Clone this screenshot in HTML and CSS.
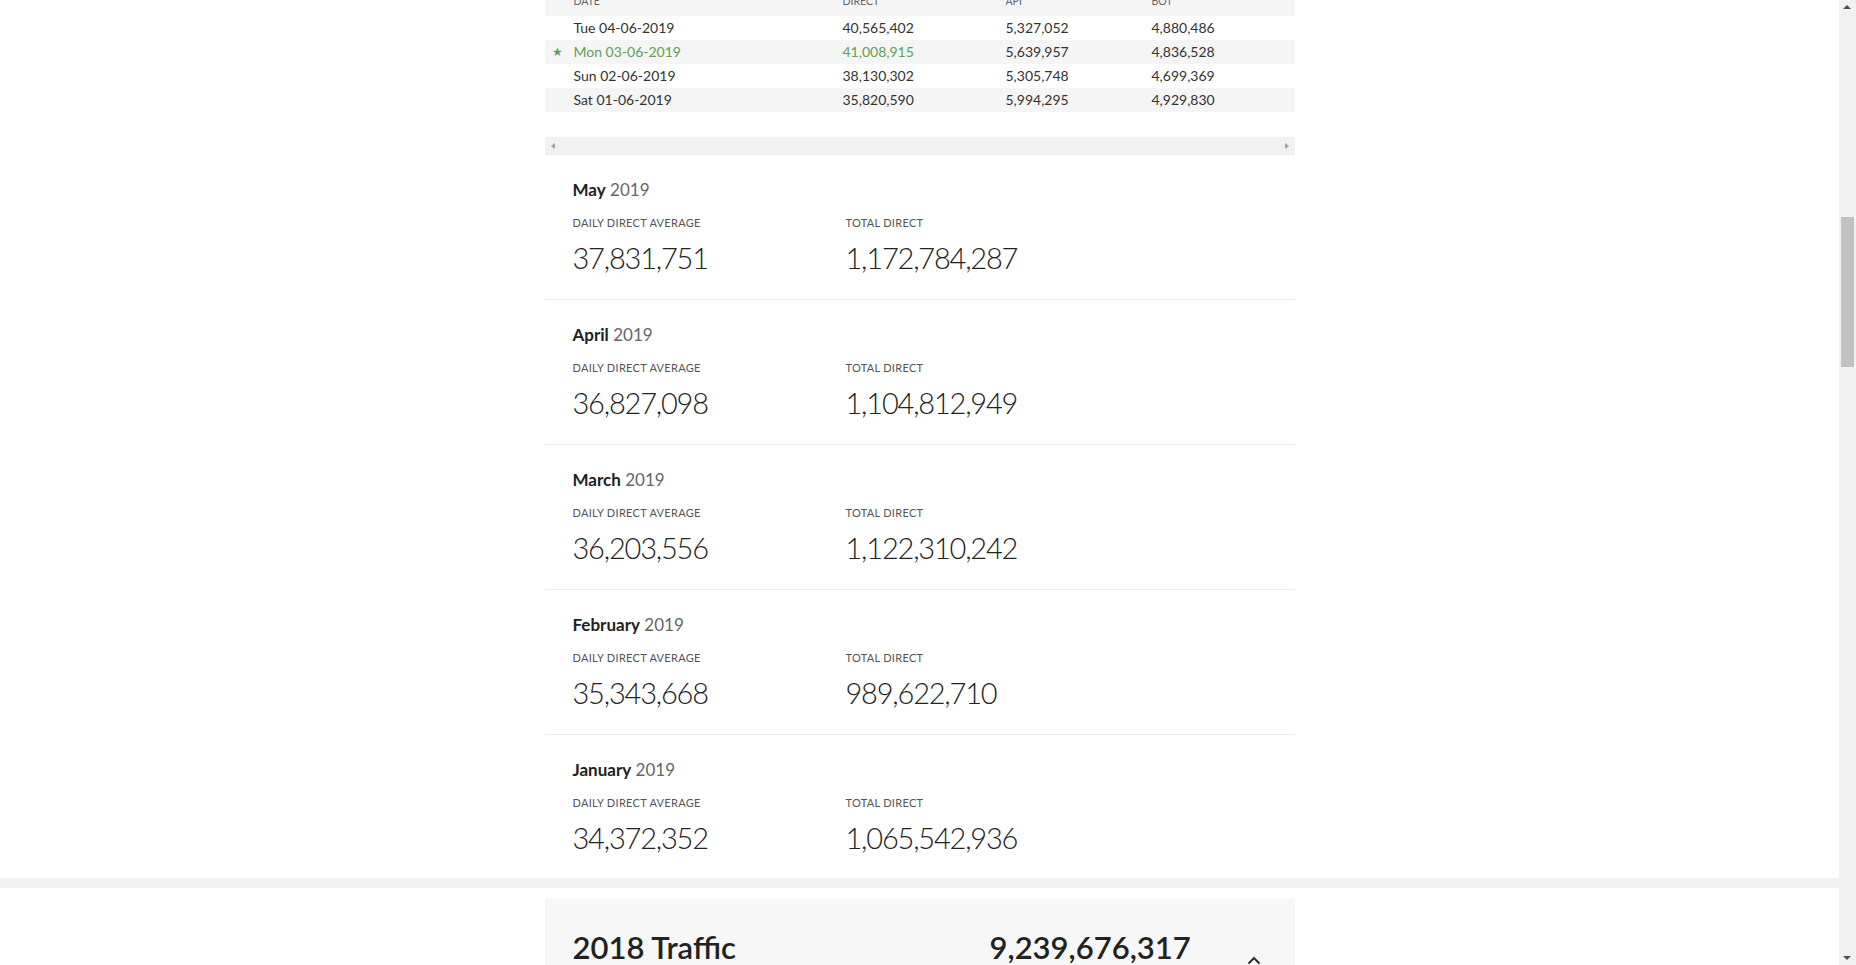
FILE: index.html
```html
<!DOCTYPE html>
<html lang="en">
<head>
<meta charset="utf-8">
<title>Traffic</title>
<link rel="stylesheet" href="styles.css">
</head>
<body>
<div class="page">
  <main class="wrap">
    <section class="daily">
      <div class="table">
        <div class="row head">
          <span class="mark"></span><span>Date</span><span>Direct</span><span>API</span><span>Bot</span>
        </div>
        <div class="row">
          <span class="mark"></span><span>Tue 04-06-2019</span><span>40,565,402</span><span>5,327,052</span><span>4,880,486</span>
        </div>
        <div class="row alt best">
          <span class="mark">★</span><span>Mon 03-06-2019</span><span>41,008,915</span><span class="plain">5,639,957</span><span class="plain">4,836,528</span>
        </div>
        <div class="row">
          <span class="mark"></span><span>Sun 02-06-2019</span><span>38,130,302</span><span>5,305,748</span><span>4,699,369</span>
        </div>
        <div class="row alt">
          <span class="mark"></span><span>Sat 01-06-2019</span><span>35,820,590</span><span>5,994,295</span><span>4,929,830</span>
        </div>
      </div>
      <div class="hscroll">
        <span class="arrow left"></span>
        <span class="arrow right"></span>
      </div>
    </section>

    <section class="months">
      <article class="month">
        <h3 class="month-title"><strong>May</strong> 2019</h3>
        <div class="stats">
          <div class="stat"><div class="label">Daily Direct Average</div><div class="value">37,831,751</div></div>
          <div class="stat"><div class="label">Total Direct</div><div class="value">1,172,784,287</div></div>
        </div>
      </article>
      <article class="month">
        <h3 class="month-title"><strong>April</strong> 2019</h3>
        <div class="stats">
          <div class="stat"><div class="label">Daily Direct Average</div><div class="value">36,827,098</div></div>
          <div class="stat"><div class="label">Total Direct</div><div class="value">1,104,812,949</div></div>
        </div>
      </article>
      <article class="month">
        <h3 class="month-title"><strong>March</strong> 2019</h3>
        <div class="stats">
          <div class="stat"><div class="label">Daily Direct Average</div><div class="value">36,203,556</div></div>
          <div class="stat"><div class="label">Total Direct</div><div class="value">1,122,310,242</div></div>
        </div>
      </article>
      <article class="month">
        <h3 class="month-title"><strong>February</strong> 2019</h3>
        <div class="stats">
          <div class="stat"><div class="label">Daily Direct Average</div><div class="value">35,343,668</div></div>
          <div class="stat"><div class="label">Total Direct</div><div class="value">989,622,710</div></div>
        </div>
      </article>
      <article class="month">
        <h3 class="month-title"><strong>January</strong> 2019</h3>
        <div class="stats">
          <div class="stat"><div class="label">Daily Direct Average</div><div class="value">34,372,352</div></div>
          <div class="stat"><div class="label">Total Direct</div><div class="value">1,065,542,936</div></div>
        </div>
      </article>
    </section>
  </main>

  <div class="band"></div>

  <main class="wrap">
    <section class="year-card">
      <h2 class="year-title">2018 Traffic</h2>
      <div class="year-total">9,239,676,317</div>
      <svg class="chevron" width="14" height="9" viewBox="0 0 14 9" aria-hidden="true">
        <polyline points="1.5,7.5 7,2 12.5,7.5" fill="none" stroke="#222" stroke-width="1.8"/>
      </svg>
    </section>
  </main>
</div>

<div class="vscroll">
  <span class="vbtn up"></span>
  <span class="thumb"></span>
  <span class="vbtn down"></span>
</div>
</body>
</html>
```

FILE: styles.css
```css
* { box-sizing: border-box; }

html, body {
  margin: 0;
  padding: 0;
  height: 100%;
  overflow: hidden;
  background: #fff;
}

body {
  font-family: "Lato", "Noto Sans", sans-serif;
  color: #333;
}

.page {
  width: calc(100% - 17px);
}

.wrap {
  width: 750px;
  margin: 0 auto;
}

/* ---------- daily table ---------- */
.table {
  margin-top: -10px;
}

.row {
  display: grid;
  grid-template-columns: 29px 269px 163px 146px 1fr;
  height: 24px;
  align-items: center;
  font-size: 14px;
  line-height: 24px;
  color: #333;
}

.row.alt,
.row.head {
  background: #f5f5f5;
}

.row.head {
  height: 26px;
  align-items: start;
  padding-top: 5px;
  font-size: 10.5px;
  line-height: 12px;
  text-transform: uppercase;
  color: #666;
}

.mark {
  text-align: center;
  padding-right: 3px;
  font-size: 12px;
}

.row.best {
  color: #5f9f55;
}

.row.best .plain {
  color: #333;
}

.hscroll {
  margin-top: 25px;
  height: 18px;
  background: #f1f1f1;
  display: flex;
  align-items: center;
  justify-content: space-between;
  padding: 0 6px;
}

.arrow {
  width: 0;
  height: 0;
  border-top: 3.5px solid transparent;
  border-bottom: 3.5px solid transparent;
}

.arrow.left {
  border-right: 4px solid #a3a3a3;
}

.arrow.right {
  border-left: 4px solid #a3a3a3;
}

/* ---------- months ---------- */
.month {
  height: 145px;
  padding: 25px 28px 0;
  border-bottom: 1px solid #ebebeb;
}

.month:last-child {
  border-bottom: 0;
  height: 143px;
}

.month-title {
  margin: 0;
  font-size: 17px;
  line-height: 20px;
  font-weight: 400;
  color: #666;
}

.month-title strong {
  font-weight: 700;
  color: #222;
}

.stats {
  display: grid;
  grid-template-columns: 273px 1fr;
  margin-top: 16px;
}

.label {
  font-size: 11px;
  line-height: 14px;
  letter-spacing: 0.3px;
  text-transform: uppercase;
  color: #555;
}

.value {
  margin-top: 10px;
  font-size: 29px;
  line-height: 36px;
  font-weight: 300;
  color: #222;
  letter-spacing: -1.2px;
}

/* ---------- year ---------- */
.band {
  height: 10px;
  background: #f1f1f1;
}

.year-card {
  margin-top: 11px;
  background: #f7f7f7;
  padding: 30px 34px 30px 28px;
  display: flex;
  align-items: flex-start;
  height: 120px;
}

.year-title {
  margin: 0;
  width: 417px;
  font-size: 31px;
  line-height: 36px;
  font-weight: 600;
  color: #222;
}

.year-total {
  font-size: 31px;
  line-height: 36px;
  font-weight: 600;
  color: #222;
}

.chevron {
  margin-left: auto;
  margin-top: 27px;
}

/* ---------- fake window scrollbar ---------- */
.vscroll {
  position: fixed;
  top: 0;
  right: 0;
  width: 17px;
  height: 100%;
  background: #f1f1f1;
}

.vbtn {
  position: absolute;
  left: 4px;
  width: 0;
  height: 0;
  border-left: 4.5px solid transparent;
  border-right: 4.5px solid transparent;
}

.vbtn.up {
  top: 5px;
  border-bottom: 4px solid #505050;
}

.vbtn.down {
  bottom: 5px;
  border-top: 4px solid #505050;
}

.thumb {
  position: absolute;
  left: 2px;
  width: 13px;
  top: 217px;
  height: 150px;
  background: #c1c1c1;
}
```
